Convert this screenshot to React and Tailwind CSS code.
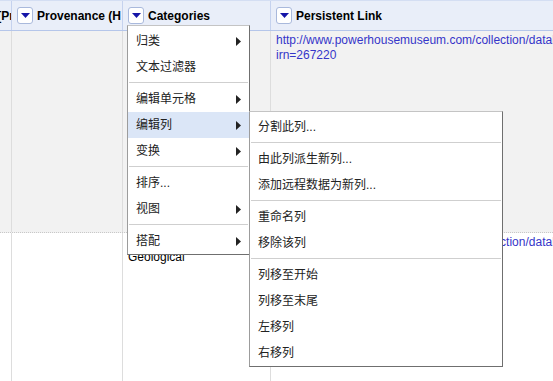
const HeadButton = () => (
  <div className="w-[16px] h-[17px] shrink-0 rounded-[3px] border border-[#a9b9dc] bg-white flex items-center justify-center">
    <svg width="9" height="5" viewBox="0 0 9 5">
      <polygon points="0,0 9,0 4.5,5" fill="#1515a8" />
    </svg>
  </div>
);

const Arrow = () => (
  <svg width="5" height="9" viewBox="0 0 5 9" className="shrink-0">
    <polygon points="0,0 5,4.5 0,9" fill="#222" />
  </svg>
);

const Item = ({ label, sub, active }) => (
  <div className={`h-[26px] flex items-center justify-between pl-[8px] pr-[8px] ${active ? 'bg-[#dbe6f7]' : ''}`}>
    <span>{label}</span>
    {sub && <Arrow />}
  </div>
);

const Sep = () => <div className="h-px bg-[#cfcfcf] mx-px mt-[2px] mb-[3px]" />;

const menuBox =
  "absolute bg-white border border-t-[#c4c4c4] border-l-[#9c9c9c] border-r-[#6f6f6f] border-b-[#6f6f6f] pt-[2px] text-[12px] text-[#222] font-['Liberation_Sans','Noto_Sans_CJK_SC',sans-serif]";

const App = () => {
  const link = 'http://www.powerhousemuseum.com/collection/database/?';

  return (
    <div className="relative w-[553px] h-[381px] overflow-hidden bg-white font-['Liberation_Sans',Arial,sans-serif] text-[12px] text-black">
      {/* header */}
      <div className="flex h-[31px] bg-[#e9eef9] border-t border-t-[#d4def3] border-b border-b-[#b5c6ea]">
        <div className="w-[12px] shrink-0 border-r border-[#c5d2ee] overflow-hidden flex justify-end items-center">
          <span className="font-bold whitespace-nowrap -mr-[3px]">[Pr</span>
        </div>
        <div className="w-[111px] shrink-0 border-r border-[#c5d2ee] overflow-hidden flex items-center gap-[4px] pl-[5px]">
          <HeadButton />
          <span className="font-bold whitespace-nowrap">Provenance (H</span>
        </div>
        <div className="w-[148px] shrink-0 border-r border-[#c5d2ee] overflow-hidden flex items-center gap-[4px] pl-[5px]">
          <HeadButton />
          <span className="font-bold whitespace-nowrap">Categories</span>
        </div>
        <div className="flex-1 flex items-center gap-[4px] pl-[5px]">
          <HeadButton />
          <span className="font-bold whitespace-nowrap">Persistent Link</span>
        </div>
      </div>

      {/* row 1 */}
      <div className="flex h-[202px] bg-[#f2f2f2] border-b border-dotted border-[#c8c8c8] leading-[15px]">
        <div className="w-[12px] shrink-0 border-r border-[#dddddd]" />
        <div className="w-[111px] shrink-0 border-r border-[#dddddd]" />
        <div className="w-[148px] shrink-0 border-r border-[#dddddd]" />
        <div className="flex-1 pt-[2px] pl-[5px] text-[#3535c9] whitespace-nowrap">
          <div>{link}</div>
          <div>irn=267220</div>
        </div>
      </div>

      {/* row 2 */}
      <div className="flex h-[200px] leading-[15px]">
        <div className="w-[12px] shrink-0 border-r border-[#dddddd]" />
        <div className="w-[111px] shrink-0 border-r border-[#dddddd]" />
        <div className="w-[148px] shrink-0 border-r border-[#dddddd] pt-[17px] pl-[5px] overflow-hidden">
          <div>Geological</div>
        </div>
        <div className="flex-1 pt-[2px] pl-[5px] text-[#3535c9] whitespace-nowrap">
          <div>{link}</div>
        </div>
      </div>

      {/* column menu */}
      <div className={`${menuBox} left-[127px] top-[25px] w-[123px]`}>
        <Item label="归类" sub />
        <Item label="文本过滤器" />
        <Sep />
        <Item label="编辑单元格" sub />
        <Item label="编辑列" sub active />
        <Item label="变换" sub />
        <Sep />
        <Item label="排序..." />
        <Item label="视图" sub />
        <Sep />
        <Item label="搭配" sub />
      </div>

      {/* edit column submenu */}
      <div className={`${menuBox} left-[249px] top-[111px] w-[254px]`}>
        <Item label="分割此列..." />
        <Sep />
        <Item label="由此列派生新列..." />
        <Item label="添加远程数据为新列..." />
        <Sep />
        <Item label="重命名列" />
        <Item label="移除该列" />
        <Sep />
        <Item label="列移至开始" />
        <Item label="列移至末尾" />
        <Item label="左移列" />
        <Item label="右移列" />
      </div>
    </div>
  );
};

export default App;
